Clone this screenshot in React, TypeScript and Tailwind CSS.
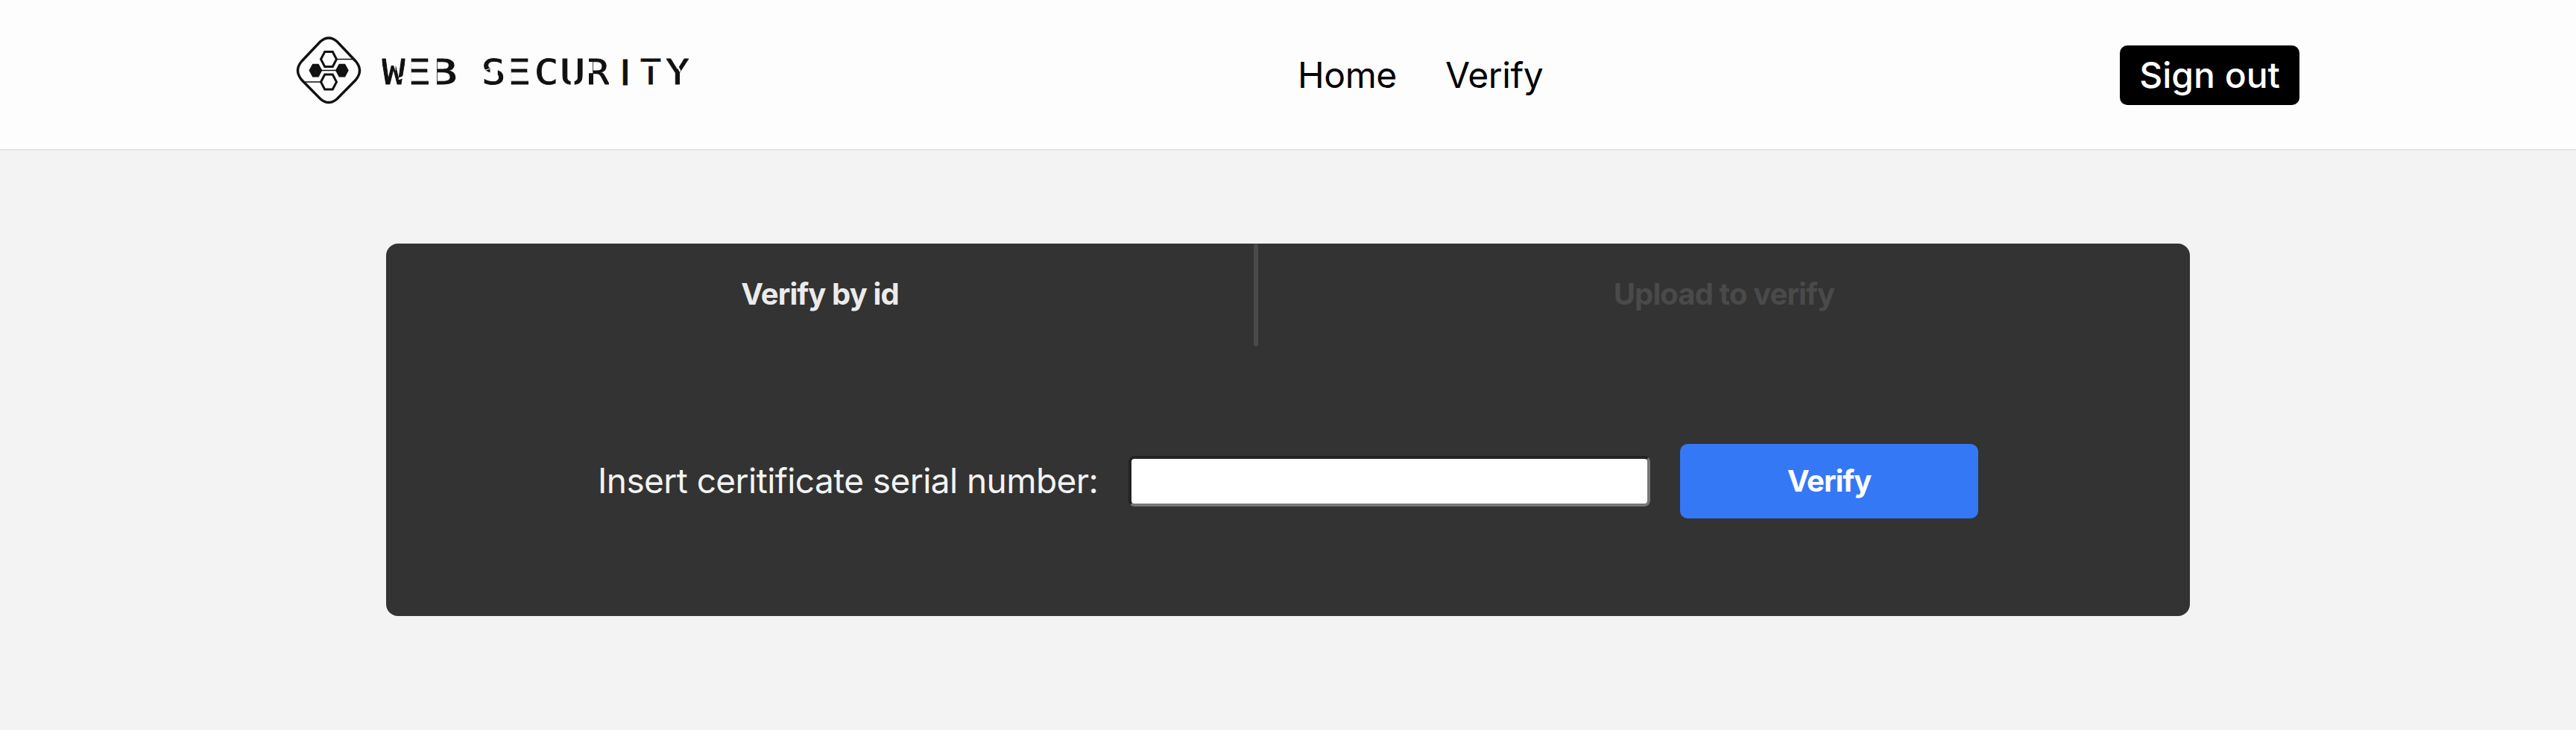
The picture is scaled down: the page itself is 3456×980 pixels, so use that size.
const wordmark: { char: string; style: string }[] = [
  {
    char: "W",
    style:
      "scale-x-[1.12] [clip-path:polygon(0_0,38%_0,38%_38%,45%_25%,58%_48%,62%_0,100%_0,100%_58%,72%_64%,72%_69%,100%_64%,100%_100%,0_100%)]",
  },
  { char: "E", style: "scale-x-[1.48] -translate-x-[5px] [clip-path:inset(0_0_0_35%)]" },
  { char: "B", style: "scale-x-[1.4] -translate-x-[4px] [clip-path:inset(0_0_0_30%)]" },
  { char: " ", style: "" },
  {
    char: "S",
    style:
      "scale-x-[1.15] [clip-path:polygon(0_0,100%_0,100%_100%,0_100%,0_50%,36%_43%,36%_57%,68%_57%,68%_41%,36%_41%,0_48%)]",
  },
  { char: "E", style: "scale-x-[1.48] -translate-x-[5px] [clip-path:inset(0_0_0_35%)]" },
  { char: "C", style: "scale-x-[1.15]" },
  {
    char: "U",
    style: "scale-x-[1.22] [clip-path:polygon(0_0,100%_0,100%_100%,58%_100%,58%_50%,43%_50%,43%_100%,0_100%)]",
  },
  {
    char: "R",
    style:
      "scale-x-[1.08] -translate-x-px [clip-path:polygon(0_0,100%_0,100%_100%,0_100%,0_53%,28%_53%,28%_26%,0_26%)]",
  },
  { char: "I", style: "font-['Inter'] font-medium translate-x-px" },
  {
    char: "T",
    style: "[clip-path:polygon(0_0,100%_0,100%_26%,0_26%,0_36%,100%_36%,100%_100%,0_100%)]",
  },
  {
    char: "Y",
    style:
      "scale-x-[1.12] translate-x-px [clip-path:polygon(0_0,50%_0,50%_40%,60%_52%,64%_47%,56%_38%,56%_0,100%_0,100%_100%,0_100%)]",
  },
];

function LogoMark() {
  return (
    <svg className="h-[94px] w-[88px]" viewBox="397 48 88 94" fill="none" stroke="#111">
      <path
        d="M429.800 55.800Q441 46 452.200 55.800L477.500 82.500Q487.500 94.500 477.500 107L452.200 132.700Q441 142.500 429.800 132.700L404.500 107Q394.500 94.500 404.500 82.500Z"
        strokeWidth="3.400"
      />
      <path d="M453 79.500H474M409 110H430M430 94.500H452" strokeWidth="1.600" />
      <path
        d="M430.500 79.500L435.700 69.500H446.300L451.500 79.500L446.300 89.500H435.700ZM430.500 110L435.700 100H446.300L451.500 110L446.300 120H435.700Z"
        strokeWidth="3"
      />
      <path
        d="M414.500 94.500L419.300 85.700H427.500L432.300 94.500L427.500 103.500H419.300ZM450 94.500L454.800 85.700H463L467.800 94.500L463 103.500H454.800Z"
        fill="#111"
        stroke="none"
      />
    </svg>
  );
}

function Logo() {
  return (
    <a href="#" className="flex items-center" aria-label="Web Security">
      <LogoMark />
      <span className="mt-[3px] ml-[25px] flex font-['DejaVu_Sans_Mono',monospace] text-[46.5px] leading-[56px] text-[#111] [-webkit-text-stroke:0.9px_#111]">
        {wordmark.map(({ char, style }, i) => (
          <span key={i} className={char === " " ? "w-[29.5px]" : "flex w-[35.1px] justify-center"}>
            <span className={style}>{char}</span>
          </span>
        ))}
      </span>
    </a>
  );
}

export default function App() {
  return (
    <div className="min-h-[980px] bg-[#f3f3f3] font-['Inter',sans-serif]">
      <header className="flex h-[202px] items-center justify-between border-b-2 border-[#e2e2e2] bg-[#fdfdfd] pr-[371px] pl-[397px]">
        <div className="-mt-[10px] w-[1000px]">
          <Logo />
        </div>
        <nav className="flex flex-1 gap-[65px] pt-px pl-[344px] text-5xl tracking-[-0.4px] text-black">
          <a href="#">Home</a>
          <a href="#">Verify</a>
        </nav>
        <button className="mt-[2px] h-20 w-[241px] rounded-[10px] bg-black text-5xl font-medium text-white">
          Sign out
        </button>
      </header>
      <main className="pt-[125px] pl-[518px]">
        <section className="h-[500px] w-[2420px] rounded-2xl bg-[#333]">
          <div className="flex h-[138px] text-[40px] font-bold tracking-[-0.9px]">
            <button className="w-[1164px] pb-[2px] text-[#ebebeb]">Verify by id</button>
            <div className="w-[6px] rounded-full bg-[#4a4a4a]" />
            <button className="flex-1 pb-[2px] text-[#4a4a4a]">Upload to verify</button>
          </div>
          <form className="flex h-[362px] items-center pl-[284px]" onSubmit={(e) => e.preventDefault()}>
            <label
              htmlFor="serial"
              className="w-[712px] pb-[2px] text-[46px] tracking-[-0.57px] whitespace-nowrap text-[#f3f3f3]"
            >
              Insert ceritificate serial number:
            </label>
            <input
              id="serial"
              className="h-[68px] w-[700px] rounded-lg border-4 border-t-[#222] border-r-[#767676] border-b-[#767676] border-l-[#222] bg-white px-2 text-4xl outline-none"
            />
            <button className="ml-10 h-[100px] w-[400px] rounded-[10px] bg-[#3478f6] text-[40px] font-bold tracking-[-1px] text-white">
              Verify
            </button>
          </form>
        </section>
      </main>
    </div>
  );
}
